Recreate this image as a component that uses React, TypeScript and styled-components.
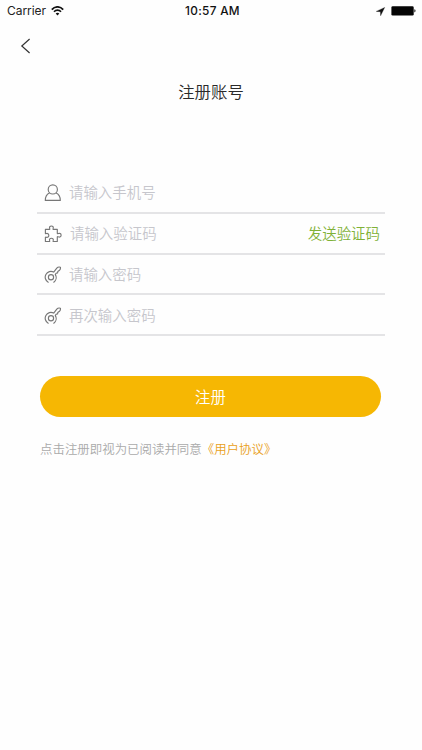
import React from "react";
import styled, { createGlobalStyle } from "styled-components";

const GlobalStyle = createGlobalStyle`
  * { box-sizing: border-box; }
  body {
    margin: 0;
    background: #fefefe;
    font-family: "Noto Sans CJK SC", sans-serif;
    font-weight: 350;
  }
`;

const Screen = styled.main`
  display: flex;
  flex-direction: column;
  width: 422px;
  height: 750px;
  overflow: hidden;
`;

const StatusBar = styled.header`
  display: grid;
  grid-template-columns: 1fr auto 1fr;
  align-items: center;
  height: 22px;
  padding: 0 6px 0 7px;
  font: 400 12px/22px Inter, sans-serif;
  color: #222;
`;

const StatusGroup = styled.div<{ $end?: boolean }>`
  display: flex;
  align-items: center;
  gap: 5px;
  justify-content: ${(p) => (p.$end ? "flex-end" : "flex-start")};
`;

const Carrier = styled.span`
  letter-spacing: -0.05px;
`;

const Clock = styled.time`
  padding-left: 2px;
  font-weight: 550;
  font-size: 11.8px;
  letter-spacing: 0.3px;
  color: #111;
`;

const NavBar = styled.nav`
  display: flex;
  align-items: center;
  height: 48px;
  padding-left: 20px;
`;

const BackButton = styled.button`
  display: flex;
  padding: 0;
  border: 0;
  background: none;
`;

const Title = styled.h1`
  margin: 9px 0 0;
  height: 24px;
  text-align: center;
  font-size: 16.4px;
  line-height: 24px;
  font-weight: 350;
  color: #2a2a2a;
`;

const Form = styled.form`
  display: flex;
  flex-direction: column;
  margin: 70px 37px 0;
`;

const Field = styled.label`
  display: flex;
  align-items: center;
  gap: 7px;
  height: 40.8px;
  padding: 1px 5px 0 7px;
  border-bottom: 2px solid #e4e4e6;
`;

const Input = styled.input`
  flex: 1;
  min-width: 0;
  height: 28px;
  padding: 0 0 2px;
  border: 0;
  outline: 0;
  background: none;
  font: inherit;
  font-size: 14.45px;
  color: #333;
  &::placeholder {
    color: #c6c6cc;
    opacity: 1;
  }
`;

const SendCode = styled.button`
  padding: 0 0 1px;
  border: 0;
  background: none;
  font: inherit;
  font-size: 14.45px;
  line-height: 28px;
  color: #7fb136;
`;

const Submit = styled.button`
  height: 41px;
  margin: 40px 4px 0 3px;
  padding: 0;
  border: 0;
  border-radius: 21px;
  background: #f6b703;
  font: inherit;
  font-size: 15.4px;
  line-height: 41px;
  color: #fff;
`;

const Terms = styled.p`
  margin: 22px 3px 0;
  font-size: 12.45px;
  line-height: 20px;
  white-space: nowrap;
  color: #aaa;
`;

const TermsLink = styled.a`
  color: #e9a021;
`;

const LineIcon = styled.svg`
  flex: none;
  margin-top: 1px;
  fill: none;
  stroke: #777;
  stroke-width: 1.15;
  stroke-linecap: round;
  stroke-linejoin: round;
`;

const UserIcon = () => (
  <LineIcon width="18" height="18" viewBox="0 0 18 18">
    <circle cx="8.8" cy="5.4" r="4.6" />
    <path d="M5.4 9C2.7 10.3 1.3 12.8 1.3 16.4h15c0-3.6-1.4-6.1-4.1-7.4" />
  </LineIcon>
);

const PuzzleIcon = () => (
  <LineIcon width="19" height="18" viewBox="0 0 19 18">
    <path d="M1.4 4.3h4.3c.3-.2.2-.5 0-.9C5.1 2 6 1 7.4 1s2.3 1 1.7 2.4c-.2.4-.3.7 0 .9h4.2v4.2c.2.3.6.3 1 .1 1.5-.7 2.8.2 2.8 1.6s-1.3 2.3-2.8 1.6c-.4-.2-.8-.2-1 .1v4.6H9.2c-.3-.3-.2-.6 0-1 .5-1.3-.4-2.3-1.8-2.3s-2.3 1-1.8 2.3c.2.4.3.7 0 1H1.4v-4.3c.2-.3.5-.2.9 0 1.3.5 2.5-.4 2.5-1.8S3.6 8 2.3 8.5c-.4.2-.7.2-.9 0Z" />
  </LineIcon>
);

const KeyIcon = () => (
  <LineIcon width="18" height="18" viewBox="0 0 18 18">
    <path d="M4.2 16.2A5.7 5.7 0 0 1 9.7 6.1L12.8 2.2C13.7 1.1 15.2.9 16.4 1.2 16.6 2.4 16.4 3.5 15.5 4.3L13.8 5.5 13.6 6.9 12.1 7.3 11.3 8.6A5.7 5.7 0 0 1 9.8 16.2" />
    <circle cx="7" cy="11.2" r="2.6" />
  </LineIcon>
);

const WifiIcon = () => (
  <svg width="13" height="10" viewBox="0 0 13 10" fill="none" stroke="#111" strokeWidth="1.7">
    <path d="M.8 3.6C4-.1 9-.1 12.2 3.6M3 5.8c2-2.2 5-2.2 7 0" />
    <path d="M4.7 7.4c1-1 2.6-1 3.6 0L6.5 9.4Z" fill="#111" stroke="none" />
  </svg>
);

const LocationIcon = () => (
  <svg width="10" height="9" viewBox="0 0 10 9">
    <path d="M8.7.4.2 4.4l4.2.3.2 4.1Z" fill="#111" stroke="#111" strokeWidth=".3" />
  </svg>
);

const BatteryIcon = () => (
  <svg width="25" height="10" viewBox="0 0 25 10">
    <rect x=".4" y=".2" width="22.3" height="9.4" rx="1.3" fill="#050505" />
    <path d="M23.4 3.3c1.5.4 1.5 2.8 0 3.2Z" fill="#050505" />
  </svg>
);

export default function App() {
  return (
    <>
      <GlobalStyle />
      <Screen>
        <StatusBar>
          <StatusGroup>
            <Carrier>Carrier</Carrier>
            <WifiIcon />
          </StatusGroup>
          <Clock>10:57 AM</Clock>
          <StatusGroup $end>
            <LocationIcon />
            <BatteryIcon />
          </StatusGroup>
        </StatusBar>
        <NavBar>
          <BackButton aria-label="返回">
            <svg width="12" height="16" viewBox="0 0 12 16" fill="none" stroke="#333" strokeWidth="1.2">
              <path d="M9.6 1 1.8 8l7.8 7" />
            </svg>
          </BackButton>
        </NavBar>
        <Title>注册账号</Title>
        <Form>
          <Field>
            <UserIcon />
            <Input type="tel" placeholder="请输入手机号" />
          </Field>
          <Field>
            <PuzzleIcon />
            <Input placeholder="请输入验证码" />
            <SendCode type="button">发送验证码</SendCode>
          </Field>
          <Field>
            <KeyIcon />
            <Input type="password" placeholder="请输入密码" />
          </Field>
          <Field>
            <KeyIcon />
            <Input type="password" placeholder="再次输入密码" />
          </Field>
          <Submit type="button">注册</Submit>
          <Terms>
            点击注册即视为已阅读并同意<TermsLink>《用户协议》</TermsLink>
          </Terms>
        </Form>
      </Screen>
    </>
  );
}
